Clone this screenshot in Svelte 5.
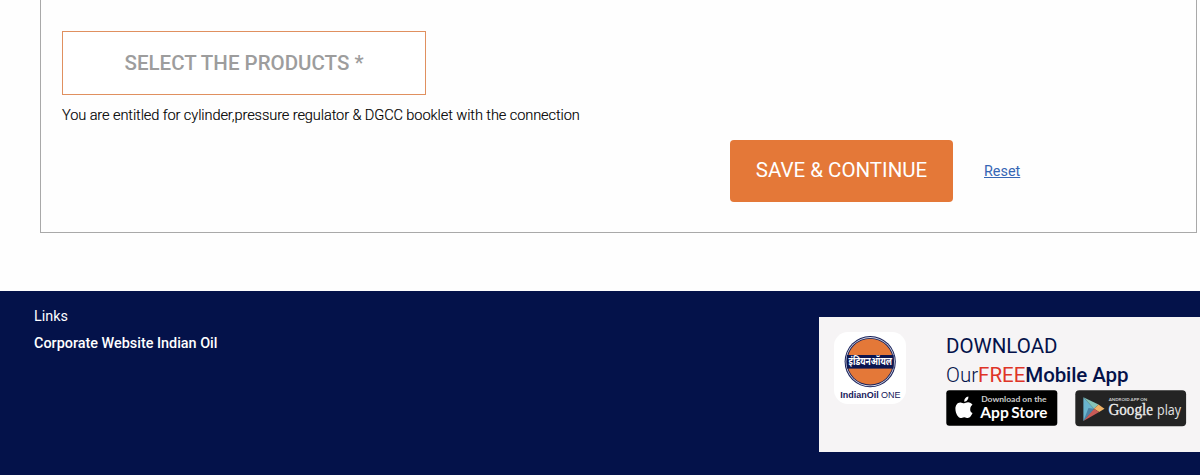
<script>
  let { entitlement = 'You are entitled for cylinder,pressure regulator & DGCC booklet with the connection' } = $props();

  let selected = $state(false);
</script>

<main>
  <section class="panel">
    <button class="products" class:selected onclick={() => (selected = true)}>SELECT THE PRODUCTS *</button>
    <p class="note">{entitlement}</p>
    <div class="actions">
      <button class="save">SAVE &amp; CONTINUE</button>
      <a class="reset" href="#reset" onclick={() => (selected = false)}>Reset</a>
    </div>
  </section>
</main>

<footer>
  <nav>
    <span class="title">Links</span>
    <a href="#corporate">Corporate Website Indian Oil</a>
  </nav>

  <div class="download">
    <svg class="app-icon" viewBox="0 0 72 72" width="72" height="72">
      <rect width="72" height="72" rx="14" fill="#fff" />
      <circle cx="36.2" cy="29.7" r="25.6" fill="#17205a" />
      <circle cx="36.2" cy="29.7" r="24.6" fill="#d9dae6" />
      <circle cx="36.2" cy="29.7" r="23.8" fill="#17205a" />
      <circle cx="36.2" cy="29.7" r="22.9" fill="#e47838" />
      <rect x="12.8" y="23" width="46.8" height="13.6" fill="#0c1650" />
      <text class="hindi" x="14.5" y="33.4" textLength="43.5" lengthAdjust="spacingAndGlyphs">इंडियनऑयल</text>
      <text class="brand" x="6.2" y="65.8" textLength="38.5" lengthAdjust="spacingAndGlyphs">IndianOil</text>
      <text class="brand thin" x="47" y="65.8" textLength="19.5" lengthAdjust="spacingAndGlyphs">ONE</text>
    </svg>

    <div class="info">
      <h2>DOWNLOAD</h2>
      <p class="tagline"><span class="our">Our</span><span class="free">FREE</span><b>Mobile App</b></p>
      <div class="stores">
        <svg viewBox="0 0 112 36" width="112" height="36">
          <rect x="0.3" y="0.3" width="111" height="35.4" rx="3" fill="#000" />
          <g fill="#fff">
            <path d="M24.2 19.4c0-2.2 1.1-3.7 2.3-4.6-1-1.6-2.6-2.5-4.5-2.5-1.6 0-2.8 1-3.9 1-1.1 0-2.3-1-3.9-.9-2.9.1-4.8 2.8-4.8 6.4 0 4.6 2.9 9.3 5.2 9.3 1.2 0 2-.9 3.6-.9s2.3.9 3.6.9c2.1 0 4.1-3.2 4.7-5-1.5-.8-2.3-2.1-2.3-3.7z" />
            <path d="M22.4 6.6c-2.6.3-4.4 2.5-4.2 5.1 2.6 0 4.4-2.4 4.2-5.1z" />
          </g>
          <text class="apple-small" x="35.2" y="12.3" textLength="65.5" lengthAdjust="spacingAndGlyphs">Download on the</text>
          <text class="apple-big" x="34.3" y="28" textLength="28.5" lengthAdjust="spacingAndGlyphs">App</text>
          <text class="apple-big" x="65.3" y="28" textLength="36" lengthAdjust="spacingAndGlyphs">Store</text>
        </svg>

        <svg viewBox="0 0 112 37" width="112" height="37">
          <rect x="0.3" y="0.3" width="110.8" height="36" rx="4" fill="#242424" />
          <path d="M8.4 7.3 19 18.7 8.4 31z" fill="#69b5cf" />
          <path d="M8.4 7.3 23.5 14.4 19 18.7z" fill="#85c4b8" />
          <path d="M23.5 14.4 29.5 18.7 24.2 22 19 18.7z" fill="#efb267" />
          <path d="M19 18.7 24.2 22 8.4 31z" fill="#c95b57" />
          <path d="M8.4 31 19 18.7 13.5 18z" fill="#4b83a6" />
          <text class="play-small" x="33.7" y="10.5" textLength="38.5" lengthAdjust="spacingAndGlyphs">ANDROID APP ON</text>
          <text class="google" x="33.4" y="25.3" textLength="44.5" lengthAdjust="spacingAndGlyphs">Google</text>
          <text class="play" x="82" y="25.3" textLength="24" lengthAdjust="spacingAndGlyphs">play</text>
        </svg>
      </div>
    </div>
  </div>
</footer>

<style>
  :global(body) {
    background: #fefefe;
    font-family: Roboto, sans-serif;
    overflow: hidden;
  }

  main {
    box-sizing: border-box;
    height: 291px;
    padding: 0 3px 0 40px;
  }

  .panel {
    box-sizing: border-box;
    height: 233px;
    padding: 30px 20px 0 21px;
    border: 1px solid #a9a9a9;
    border-top: 0;
  }

  .products {
    display: block;
    width: 364px;
    height: 64px;
    margin-top: 1px;
    padding: 0 0 1px;
    border: 1px solid #e0905f;
    background: #fff;
    color: #9d9d9d;
    font: 500 20.5px Roboto, sans-serif;
    cursor: pointer;
  }

  .selected { color: #333; }

  .note {
    margin: 10px 0 0;
    font-size: 14.6px;
    font-weight: 300;
    line-height: 20px;
    letter-spacing: -0.1px;
    white-space: nowrap;
    color: #000;
    -webkit-text-stroke: 0.15px #000;
  }

  .actions {
    display: flex;
    align-items: center;
    gap: 31px;
    margin: 15px 0 0 668px;
  }

  .save {
    width: 223px;
    height: 62px;
    padding: 0 0 2px;
    border: 0;
    border-radius: 4px;
    background: #e47838;
    color: #fff;
    font: 400 20.5px Roboto, sans-serif;
    cursor: pointer;
  }

  .reset {
    font-size: 14.4px;
    color: #3666b5;
  }

  footer {
    display: flex;
    justify-content: space-between;
    box-sizing: border-box;
    height: 184px;
    padding-left: 34px;
    background: #04124a;
    color: #fff;
  }

  nav {
    display: flex;
    flex-direction: column;
    gap: 7px;
    padding-top: 16px;
    font-size: 14.4px;
    line-height: 20px;
  }

  nav a {
    color: #fff;
    font-weight: 500;
    text-decoration: none;
  }

  .download {
    display: flex;
    gap: 40px;
    box-sizing: border-box;
    width: 381px;
    height: 135px;
    margin-top: 26px;
    padding: 15px 0 0 15px;
    background: #f6f4f5;
    color: #04124a;
  }

  svg {
    display: block;
    flex: none;
  }

  h2,
  .tagline {
    margin: 0;
    font-size: 20.5px;
    font-weight: 400;
    line-height: 29px;
  }

  .our { font-weight: 300; }
  .free { color: #df3427; }

  .tagline b {
    font-weight: 500;
    letter-spacing: -0.1px;
  }

  .stores {
    display: flex;
    gap: 17px;
  }

  .hindi {
    font: 700 10.5px "Noto Sans Devanagari", "Noto Sans", sans-serif;
    fill: #fff;
  }

  .brand {
    font: 700 9.4px "Liberation Sans", sans-serif;
    fill: #17205a;
  }

  .brand.thin { font-weight: 400; }

  .apple-small {
    font: 700 7px Lato, sans-serif;
    fill: #ccc;
  }

  .apple-big {
    font: 700 16px Lato, sans-serif;
    fill: #fff;
  }

  .play-small {
    font: 700 4.5px Lato, sans-serif;
    fill: #ccc;
  }

  .google {
    font: 400 17px "Liberation Serif", serif;
    fill: #eee;
    stroke: #eee;
    stroke-width: 0.3;
  }

  .play {
    font: 400 15px "Open Sans", sans-serif;
    fill: #e4e4e4;
  }
</style>
